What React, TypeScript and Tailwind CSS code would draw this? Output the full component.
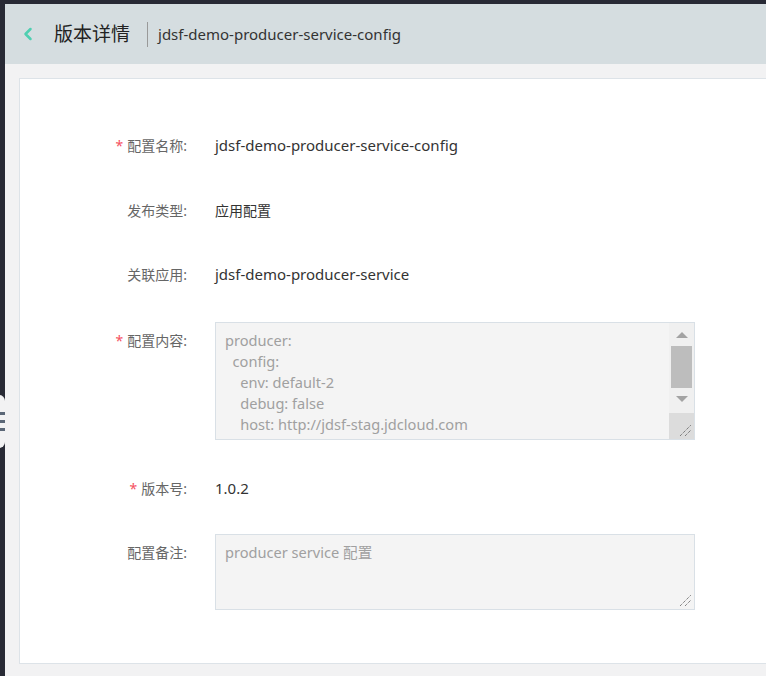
import { ChevronLeft } from 'lucide-react';

const font = { fontFamily: '"Noto Sans", "Noto Sans CJK SC", sans-serif' };

function Label({ text, required }: { text: string; required?: boolean }) {
  return (
    <div className="w-[195px] shrink-0 pr-[28px] text-right text-[14px] text-[#666]">
      {required && <span className="mr-[4px] text-[#f5515f]">*</span>}
      {text}:
    </div>
  );
}

function ResizeGrip() {
  return (
    <svg width="13" height="13" viewBox="0 0 13 13" className="absolute bottom-[2px] right-[2px]">
      <line x1="1" y1="12" x2="12" y2="1" stroke="#555" strokeWidth="1" strokeDasharray="1 1" />
      <line x1="6" y1="12" x2="12" y2="6" stroke="#555" strokeWidth="1" strokeDasharray="1 1" />
    </svg>
  );
}

export default function App() {
  const code = `producer:
  config:
    env: default-2
    debug: false
    host: http://jdsf-stag.jdcloud.com`;

  return (
    <div className="relative flex h-[676px] w-[766px] overflow-hidden bg-[#282a35]" style={font}>
      {/* collapsed side toggle */}
      <div className="absolute left-[-20px] top-[395px] flex h-[53px] w-[25px] flex-col items-end justify-center gap-[5px] rounded-r-[6px] bg-[#f2f2f3]">
        <span className="h-[3px] w-[6px] bg-[#5b6777]" />
        <span className="h-[3px] w-[6px] bg-[#5b6777]" />
        <span className="h-[3px] w-[6px] bg-[#5b6777]" />
      </div>

      <div className="ml-[5px] mt-[4px] flex flex-1 flex-col bg-[#f2f2f3]">
        {/* header */}
        <div className="flex h-[60px] shrink-0 items-center bg-[#d5dde0] pl-[13px]">
          <ChevronLeft className="h-[20px] w-[20px] text-[#4fcfb1]" strokeWidth={3} />
          <span className="ml-[16px] text-[19px] text-[#222]">版本详情</span>
          <span className="ml-[17px] h-[25px] w-px bg-[#999]" />
          <span className="ml-[10px] text-[15px] text-[#333]">jdsf-demo-producer-service-config</span>
        </div>

        {/* panel */}
        <div className="ml-[14px] mt-[14px] mb-[12px] flex-1 border border-r-0 border-[#dde3e8] bg-white pt-[50px]">
          <div className="flex h-[32px] items-center">
            <Label text="配置名称" required />
            <span className="text-[15px] text-[#333]">jdsf-demo-producer-service-config</span>
          </div>

          <div className="mt-[33px] flex h-[32px] items-center">
            <Label text="发布类型" />
            <span className="text-[14px] text-[#333]">应用配置</span>
          </div>

          <div className="mt-[32px] flex h-[32px] items-center">
            <Label text="关联应用" />
            <span className="text-[15px] text-[#333]">jdsf-demo-producer-service</span>
          </div>

          <div className="mt-[32px] flex items-start">
            <div className="flex h-[36px] items-center">
              <Label text="配置内容" required />
            </div>
            <div className="relative flex h-[118px] w-[480px] border border-[#d9e0e6] bg-[#f4f4f4]">
              <pre className="flex-1 overflow-hidden pl-[9px] pt-[7px] text-[14.6px] leading-[21px] text-[#a0a0a0]" style={font}>
                {code}
              </pre>
              <div className="relative flex w-[25px] flex-col items-center bg-[#f0f0f0]">
                <div className="mt-[9px] h-0 w-0 border-x-[6px] border-b-[6px] border-x-transparent border-b-[#a3a3a3]" />
                <div className="mt-[8px] h-[42px] w-[21px] bg-[#bdbdbd]" />
                <div className="mt-[8px] h-0 w-0 border-x-[6px] border-t-[6px] border-x-transparent border-t-[#a3a3a3]" />
                <div className="absolute bottom-0 left-0 h-[26px] w-[25px] bg-[#dcdcdc]">
                  <ResizeGrip />
                </div>
              </div>
            </div>
          </div>

          <div className="mt-[32px] flex h-[32px] items-center">
            <Label text="版本号" required />
            <span className="text-[15px] text-[#333]">1.0.2</span>
          </div>

          <div className="mt-[30px] flex items-start">
            <div className="flex h-[36px] items-center">
              <Label text="配置备注" />
            </div>
            <div className="relative h-[76px] w-[480px] border border-[#d9e0e6] bg-[#f4f4f4] pl-[9px] pt-[7px] text-[14.6px] leading-[21px] text-[#a0a0a0]">
              producer service 配置
              <ResizeGrip />
            </div>
          </div>
        </div>
      </div>
    </div>
  );
}
